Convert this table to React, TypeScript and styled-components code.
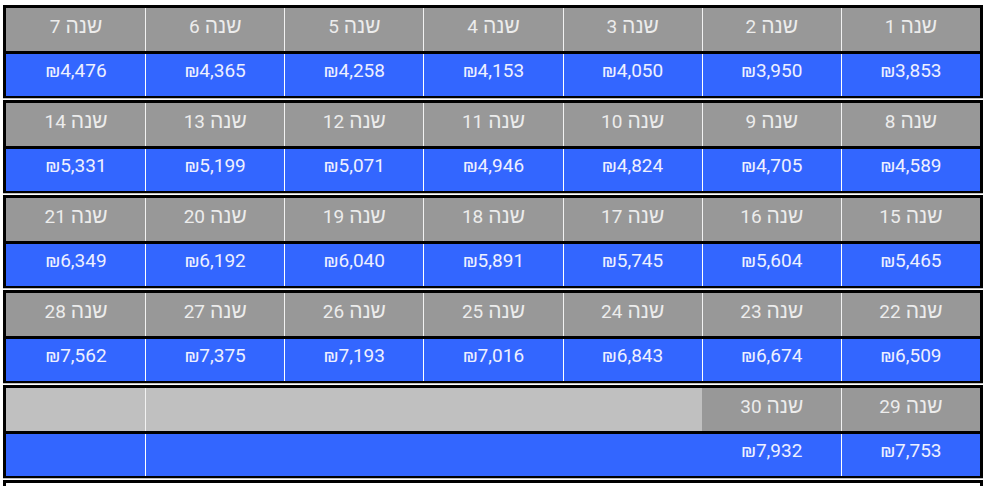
import React from 'react'
import styled, { createGlobalStyle } from 'styled-components'

const values = [
    '3,853', '3,950', '4,050', '4,153', '4,258', '4,365', '4,476',
    '4,589', '4,705', '4,824', '4,946', '5,071', '5,199', '5,331',
    '5,465', '5,604', '5,745', '5,891', '6,040', '6,192', '6,349',
    '6,509', '6,674', '6,843', '7,016', '7,193', '7,375', '7,562',
    '7,753', '7,932',
]

const COLS = 7

const GlobalStyle = createGlobalStyle`
    html, body {
        margin: 0;
        padding: 0;
        background: #ffffff;
    }
    body {
        font-family: Roboto, "Liberation Sans", "DejaVu Sans", sans-serif;
    }
`

const App = () => {
    const blocks: number[][] = []
    for (let i = 0; i < values.length; i += COLS) {
        blocks.push(values.slice(i, i + COLS).map((_, j) => i + j))
    }

    return (
        <Page>
            <GlobalStyle />
            {blocks.map((block, b) => {
                const empty = COLS - block.length
                return (
                    <Block key={b}>
                        <Row>
                            {block.map((idx, c) => (
                                <HeadCell key={idx} $divider={c < COLS - 1 && !(empty > 0 && c === block.length - 1)}>
                                    <Word>שנה</Word> {idx + 1}
                                </HeadCell>
                            ))}
                            {Array.from({ length: empty }).map((_, e) => (
                                <HeadCell key={'e' + e} $empty $divider={e === empty - 2}>&nbsp;</HeadCell>
                            ))}
                        </Row>
                        <Separator />
                        <Row>
                            {block.map((idx, c) => (
                                <ValueCell key={idx} $divider={c < COLS - 1 && !(empty > 0 && c === block.length - 1)}>
                                    <Amount>₪{values[idx]}</Amount>
                                </ValueCell>
                            ))}
                            {Array.from({ length: empty }).map((_, e) => (
                                <ValueCell key={'e' + e} $divider={e === empty - 2}>&nbsp;</ValueCell>
                            ))}
                        </Row>
                    </Block>
                )
            })}
            <Tail />
        </Page>
    )
}

const Page = styled.div`
    padding: 5px 3px 0 3px;
    width: 986px;
    height: 486px;
    box-sizing: border-box;
    overflow: hidden;
`

const Block = styled.div`
    border: 3px solid #000;
    border-top-width: 3px;
    border-bottom-width: 2px;
    margin-bottom: 2px;
    box-shadow: 0 1px 0 #bdbdbd;
`

const Row = styled.div`
    display: grid;
    grid-template-columns: repeat(7, 1fr);
    direction: rtl;
`

const Separator = styled.div`
    height: 3px;
    background: #000;
`

const HeadCell = styled.div<{ $divider?: boolean; $empty?: boolean }>`
    height: 43px;
    box-sizing: border-box;
    display: flex;
    align-items: baseline;
    justify-content: center;
    gap: 5px;
    padding-top: 7px;
    line-height: 22px;
    background: ${p => (p.$empty ? '#c0c0c0' : '#989898')};
    border-left: 1px solid ${p => (p.$divider ? '#f2f2f2' : 'transparent')};
    color: #ececec;
    font-size: 19px;
    direction: rtl;
    white-space: nowrap;
`

const Word = styled.span`
    font-size: 21px;
`

const ValueCell = styled.div<{ $divider?: boolean }>`
    height: 42px;
    box-sizing: border-box;
    display: flex;
    align-items: center;
    justify-content: center;
    padding-bottom: 9px;
    background: #3366ff;
    border-left: 1px solid ${p => (p.$divider ? '#ffffff' : 'transparent')};
    color: #eef0ff;
    font-size: 19px;
    white-space: nowrap;
`

const Amount = styled.span`
    direction: ltr;
    unicode-bidi: isolate;
`

const Tail = styled.div`
    height: 4px;
    border: 3px solid #000;
    border-bottom: none;
`

export default App
